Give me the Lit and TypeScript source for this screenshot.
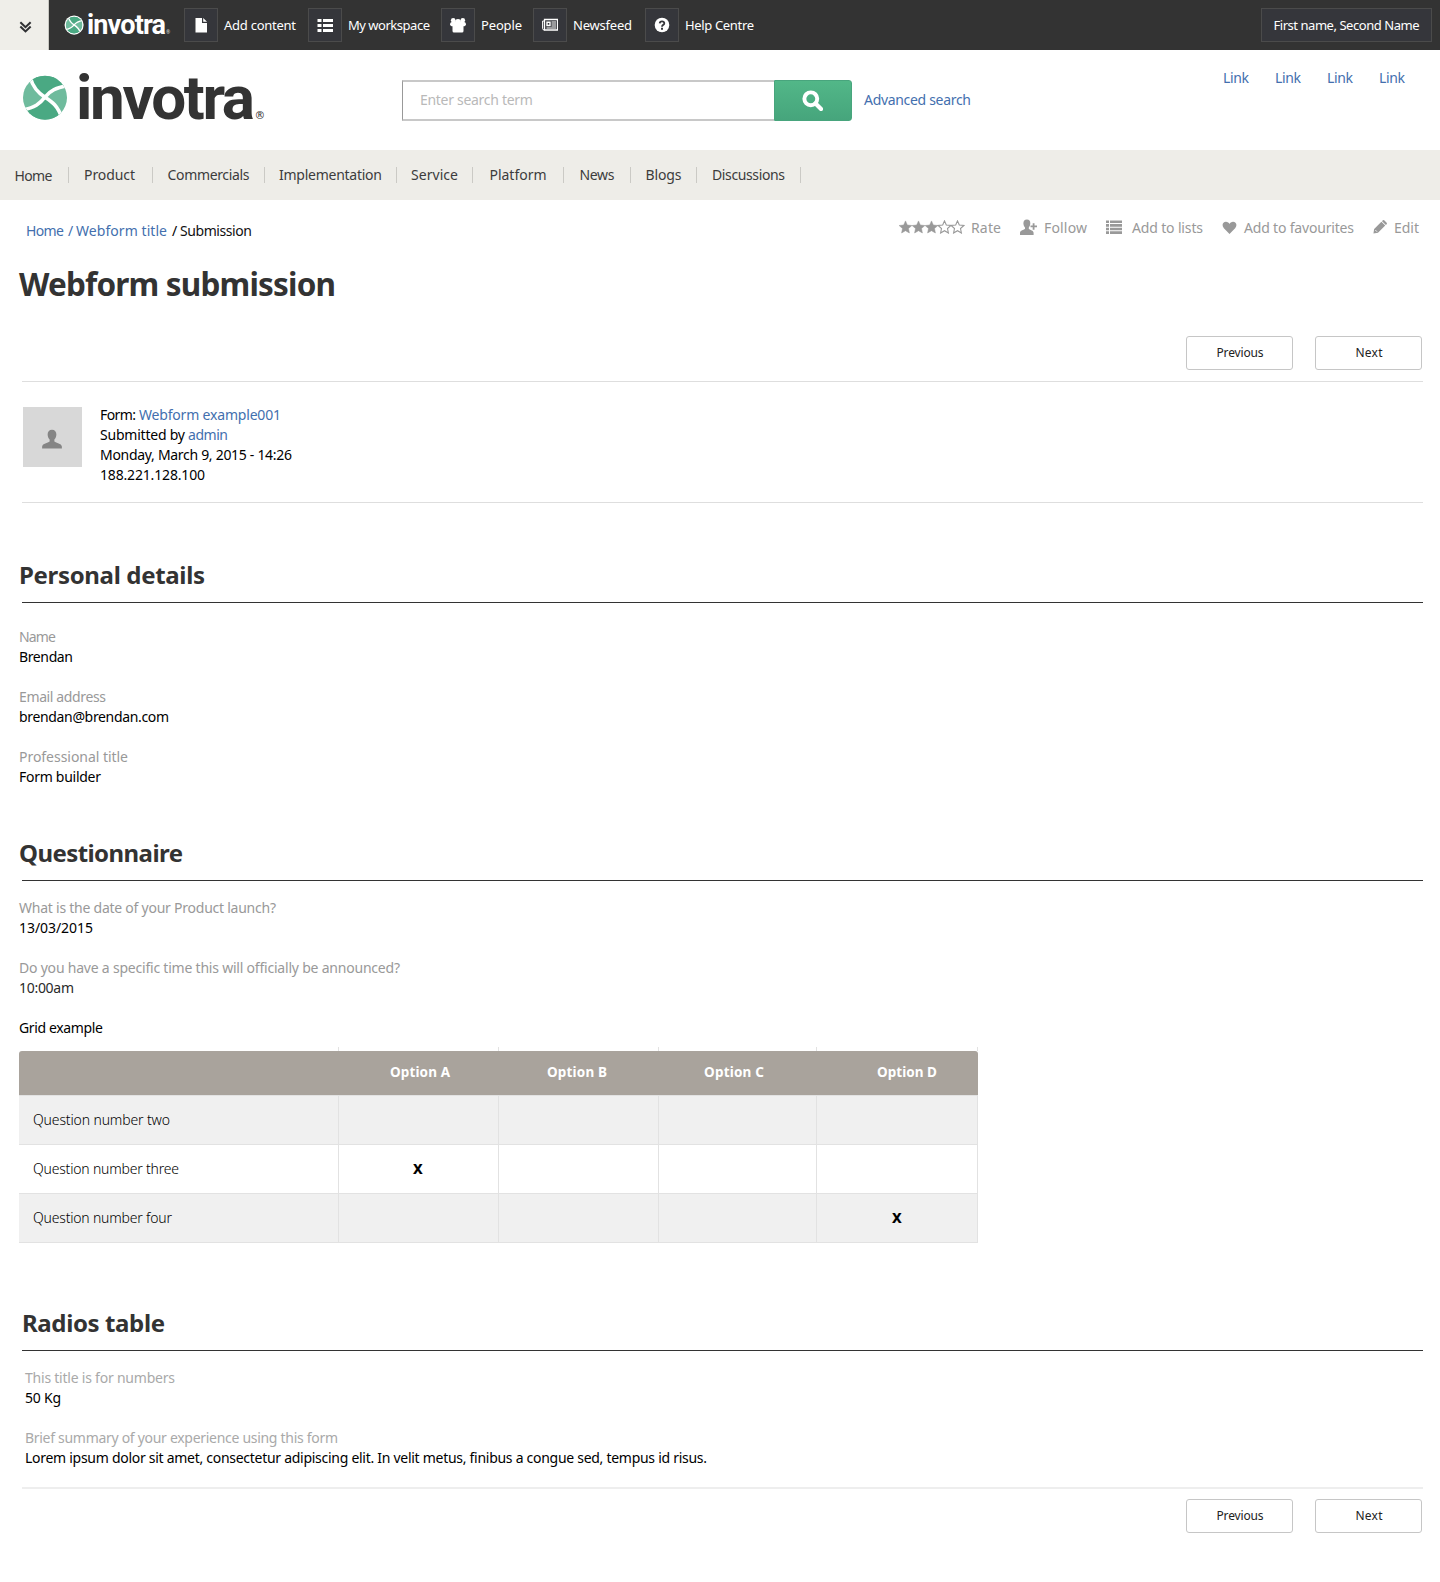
import { LitElement, html, svg, css } from "lit";
import { customElement, property } from "lit/decorators.js";

/** Single line of text whose tracking is adjusted to fill a given measure. */
@customElement("fit-text")
class FitText extends LitElement {
  static styles = css`
    :host { display: inline-block; white-space: nowrap; flex: none; text-align: left; }
  `;
  @property() text = "";
  @property({ type: Number }) w = 0;

  render() {
    return html`<span>${this.text}</span>`;
  }

  updated() {
    const span = this.renderRoot.querySelector("span") as HTMLElement;
    span.style.letterSpacing = "0";
    const natural = span.getBoundingClientRect().width;
    const gaps = Math.max(1, this.text.length - 1);
    span.style.letterSpacing = `${(this.w - natural) / gaps}px`;
    this.style.width = `${this.w}px`;
  }
}

const fit = (text: string, w: number) => html`<fit-text .text=${text} .w=${w}></fit-text>`;

const mark = (ring: boolean) => svg`
  <circle cx="22" cy="22" r=${ring ? 25 : 22} fill=${ring ? "#fff" : "none"}></circle>
  <clipPath id="disc"><circle cx="22" cy="22" r="22"></circle></clipPath>
  <g clip-path="url(#disc)">
    <rect width="44" height="44" fill="#6fbb9d"></rect>
    <path d="M8 3C10 12 15 17 22 21.5C27 15 33 12 44 10V-4H8Z" fill="#4aa983"></path>
    <path d="M38 41C35 30 29 26 22 21.5C17 28 12 32 0 34V48H38Z" fill="#4aa983"></path>
    <path d="M7 1C10 12 15 17 22 21.5S35 30 39 43M46 9.500C33 12 27 15 22 21.500S12 32 -2 34.500"
      fill="none" stroke="#fff" stroke-width="3.600"></path>
  </g>`;

const icons = {
  page: svg`<path d="M2.500 1H9v5h5v9.500H2.500Z" fill="currentColor"/><path d="M10.200 1L14 4.800H10.200Z" fill="currentColor"/>`,
  list: svg`<path d="M0.500 2h4v3h-4zM6 2h10v3H6zM0.500 7h4v3h-4zM6 7h10v3H6zM0.500 12h4v3h-4zM6 12h10v3H6z" fill="currentColor"/>`,
  people: svg`<g fill="currentColor"><circle cx="3.200" cy="3.200" r="2.300"/><circle cx="12.800" cy="3.200" r="2.300"/><circle cx="8" cy="5" r="3"/><path d="M0 8q0-3 2-3h12q2 0 2 3l-1.500 1.300H13.500V14q0 1.500-1.500 1.500H4Q2.500 15.500 2.500 14V9.300H1.500Z"/></g>`,
  news: svg`<g fill="none" stroke="currentColor"><path d="M2.500 2.500h13v10.500h-13z" stroke-width="1.300"/><path d="M2.500 4H.6v7.500q0 1.500 1.900 1.500M9.500 5h4.500M9.500 7h4.500M9.500 9h4.500M4.500 11h9.500"/><path d="M5 5.200h3v3.300H5z" stroke-width="1.400"/></g>`,
  help: svg`<circle cx="8" cy="8" r="7.300" fill="currentColor"/><path d="M5.700 6.300Q5.900 4.300 8 4.300T10.300 6.200Q10.300 7.300 9.200 7.900T8 9.700" fill="none" stroke="#35363b" stroke-width="1.800"/><path d="M7 10.800h2v1.900H7z" fill="#35363b"/>`,
  follow: svg`<path d="M6.500.5C8.700.5 9.800 2 9.700 4.200 9.600 6 8.800 7.200 8.300 8v1.500c1.500 1 4.200 1.300 4.500 3.500V15H0v-2c.3-2.200 3-2.500 4.700-3.500V8C4 7.200 3.300 6 3.200 4.200 3.200 2 4.300.5 6.500.5Z" fill="currentColor"/><path d="M12.800 4v6M9.900 7H16" stroke="currentColor" stroke-width="1.700"/>`,
  lines: svg`<path d="M0 1.500h3v2.600H0zM4 1.500h12v2.600H4zM0 5.100h3v2.600H0zM4 5.100h12v2.600H4zM0 8.700h3v2.600H0zM4 8.700h12v2.600H4zM0 12.300h3v2.600H0zM4 12.300h12v2.600H4z" fill="currentColor"/>`,
  heart: svg`<path d="M8 15L2 8.800C-.8 5.600 1 1.800 4.200 1.800 6 1.800 7.300 2.800 8 4.200 8.700 2.800 10 1.800 11.800 1.800 15 1.800 16.800 5.600 14 8.800Z" fill="currentColor"/>`,
  pencil: svg`<path d="M.5 15.500l.8-5.200L9.600 2l4.400 4.400L5.700 14.700ZM10.300 1.300l.9-.9q.8-.7 1.600 0l2.800 2.800q.7.800 0 1.600l-.9.900Z" fill="currentColor"/><path d="M2.700 11.500l1.900 1.900" stroke="#fff" stroke-width="1"/>`,
  person: svg`<path d="M8 .5c2.300 0 3.600 1.600 3.500 4C11.400 6.300 10.600 7.600 9.900 8.300v1.600c1.500 1.200 5.600 1.500 6 4v1.600H.1v-1.600c.4-2.500 4.500-2.800 6-4V8.300C5.400 7.600 4.600 6.300 4.500 4.500 4.400 2.100 5.700.5 8 .5Z" fill="currentColor"/>`,
  search: svg`<circle cx="6.700" cy="6.700" r="4.900" fill="none" stroke="currentColor" stroke-width="3"/><path d="M10.300 10.300l4.200 4.200" stroke="currentColor" stroke-width="3.200" stroke-linecap="round"/>`,
  chevrons: svg`<path d="M2.500 3.500L8 8.700l5.500-5.200M2.500 8L8 13.200 13.500 8" fill="none" stroke="currentColor" stroke-width="2.200"/>`,
};

const icon = (name: keyof typeof icons, size = 16) =>
  html`<svg class="icon" width=${size} height=${size} viewBox="0 0 16 16">${icons[name]}</svg>`;

const STAR = "M6.500 .4L8.300 4.500 12.900 5 9.500 8 10.400 12.500 6.500 10.200 2.600 12.500 3.500 8 .1 5 4.700 4.500Z";

const TOOLS: [keyof typeof icons, string, number, number][] = [
  ["page", "Add content", 72, 308 - 184],
  ["list", "My workspace", 82, 441 - 308],
  ["people", "People", 41, 533 - 441],
  ["news", "Newsfeed", 59, 645 - 533],
  ["help", "Help Centre", 69, 120],
];
const NAV: [string, number][] = [
  ["Home", 38], ["Product", 51], ["Commercials", 82], ["Implementation", 103], ["Service", 47],
  ["Platform", 57], ["News", 35], ["Blogs", 36], ["Discussions", 73],
];
const OPTIONS: [string, string][] = [["Option A", "a"], ["Option B", "b"], ["Option C", "c"], ["Option D", "d"]];
const ROWS: [string, number, number][] = [
  ["Question number two", 137, -1],
  ["Question number three", 146, 0],
  ["Question number four", 139, 3],
];

@customElement("app-root")
class AppRoot extends LitElement {
  static styles = css`
    :host { display: block; width: 1440px; height: 1582px; background: #fff; color: #000;
      font: 450 14px/20px "Noto Sans", "Open Sans", sans-serif; overflow: hidden; }
    * { box-sizing: border-box; }
    .icon { display: block; flex: none; }
    a, .link { color: #436fae; text-decoration: none; }

    .topbar { display: flex; align-items: center; height: 50px; background: #333; color: #fff; font-size: 13px; padding-right: 8px; }
    .toggle { display: flex; align-items: center; justify-content: center; width: 49px; height: 50px; padding: 2px 0 0 2px;
      background: #efeee9; color: #2f3033; border-right: 1px solid #c9c8c2; }
    .minilogo { margin-left: 14px; width: 121px; height: 30px; flex: none; overflow: visible; }
    .tool { display: flex; align-items: center; gap: 6px; flex: none; }
    .box { display: flex; align-items: center; justify-content: center; width: 34px; height: 34px; background: #35363b; border: 1px solid #4b4b4b; }
    .user { display: flex; align-items: center; justify-content: center; width: 171px; height: 34px; margin-left: auto;
      background: #35363b; border: 1px solid #4b4b4b; }

    .header { display: flex; height: 100px; padding-left: 22px; }
    .logo { width: 380px; height: 70px; flex: none; margin-top: 13px; overflow: visible; }
    .word { font-family: Roboto, "Open Sans", sans-serif; font-weight: 700; }
    .search { display: flex; align-items: center; height: 41px; margin-top: 30px; }
    .field { width: 372px; height: 41px; padding: 0 0 2px 17px; font: inherit; letter-spacing: -0.300px; background: #fff; outline: none;
      border: solid #c8c8c8; border-width: 2px 0 2px 1px; border-left-color: #999; border-radius: 0; }
    .field::placeholder { color: #b9b9b9; opacity: 1; }
    .go { display: flex; align-items: center; justify-content: center; width: 78px; height: 41px; padding: 0 1px 0 0; color: #fff;
      border: 1px solid #48a57d; border-radius: 0 3px 3px 0; background: linear-gradient(#52b788, #46a57c); }
    .advanced { margin: -2px 0 0 12px; }
    .links { display: flex; gap: 26px; margin: 18px 35px 0 auto; }

    .nav { display: grid; grid-template-columns: 69px 84px 112px 132px 76px 91px 67px 66px 104px; align-items: center;
      height: 50px; background: #eeede8; color: #3c3c3c; }
    .item { display: flex; justify-content: center; height: 16px; line-height: 15px; border-right: 1px solid #cbcac5; }
    .item:first-child { line-height: 17px; padding-right: 1px; }
    .item:nth-child(2) { padding-right: 2px; }

    .meta { display: flex; justify-content: space-between; height: 62px; padding: 21px 21px 0 26px; }
    .crumbs { display: flex; }
    .crumbs .slash { margin: 0 1px 0 4px; width: 7px; }
    .crumbs .slash.last { margin-left: 5px; }
    .crumbs .current { color: #111; }
    .actions { display: flex; align-items: center; height: 16px; color: #999; margin-top: -2px; }
    .actions fit-text { margin-top: 2px; }
    .stars { width: 66px; height: 14px; margin-right: 6px; }
    .act { display: flex; align-items: center; margin-left: 19px; }
    .act:first-child { margin-left: 0; }
    .g7 { gap: 7px; } .g9 { gap: 10px; }

    h1, h2 { margin: 0; color: #333; font-weight: 700; }
    h1 { font-size: 31.500px; line-height: 44px; padding-left: 19px; height: 44px; }
    .pager { display: flex; justify-content: flex-end; gap: 22px; padding-right: 18px; height: 34px; }
    .btn { display: flex; align-items: center; justify-content: center; width: 107px; height: 34px; padding: 0 0 0 1px; background: #fff;
      border: 1px solid #c6c6c6; border-radius: 3px; font: inherit; font-size: 12px; color: #222; }
    .top { margin-top: 30px; }

    .info { display: flex; gap: 18px; height: 122px; margin: 11px 17px 0 22px; padding: 25px 0 0 1px; border: solid #dedede; border-width: 1px 0; }
    .avatar { display: flex; align-items: center; justify-content: center; width: 59px; height: 60px; padding: 3px 2px 0 0; background: #d8d8d8; color: #858585; }
    .lines { display: flex; flex-direction: column; margin-top: -2px; }
    .line { display: flex; gap: 3px; height: 20px; }

    h2 { font-size: 24px; line-height: 36px; height: 46px; margin: 0 17px 0 22px; border-bottom: 1px solid #333; }
    h2 fit-text { margin-left: -3px; }
    .s1 { margin-top: 54px; }
    .s2 { margin-top: 48px; }
    .s3 { margin-top: 62px; }
    .s3 fit-text { margin-left: 0; }
    .fields { display: flex; flex-direction: column; gap: 20px; padding-left: 19px; }
    .f1 { padding-top: 24px; }
    .f2 { padding-top: 17px; }
    .f3 { padding: 17px 0 0 25px; }
    .field-row { display: flex; flex-direction: column; }
    .label { color: #999; }
    .f3 .label { color: #a9a9a9; }
    .dim { color: #2a2a2a; }

    .grid { width: 959px; margin: 9px 0 0 19px; }
    .r { display: grid; grid-template-columns: 320px 160px 160px 158px 161px; height: 49px; border-bottom: 1px solid #e2e2e2; background: #fff; }
    .r.odd { background: #f0f0f0; }
    .r .c { display: flex; align-items: center; border-right: 1px solid #e2e2e2; }
    .r .q { padding: 0 0 1px 14px; font-weight: 350; }
    .r .x { padding-left: 74px; font-weight: 800; }
    .r .x:last-child { padding-left: 75px; }
    .stubs { height: 4px; border: 0; }
    .head { height: 45px; background: #a9a39c; border-radius: 3px 3px 0 0; color: #fff; font-weight: 700; font-size: 13.500px; }
    .head .c { border: 0; padding-bottom: 2px; }
    .head .a { padding-left: 51px; } .head .b { padding-left: 48px; } .head .cc { padding-left: 45px; } .head .d { padding-left: 60px; }
    .end { height: 2px; margin: 19px 17px 10px 22px; background: #eee; }
  `;

  private field(label: string, lw: number, value: string, vw: number, tone = "") {
    return html`<div class="field-row">
      <div class="label">${fit(label, lw)}</div>
      <div class=${tone}>${fit(value, vw)}</div>
    </div>`;
  }

  private pager(cls: string) {
    return html`<div class="pager ${cls}">
      <button class="btn">${fit("Previous", 47)}</button>
      <button class="btn">${fit("Next", 27)}</button>
    </div>`;
  }

  render() {
    return html`
      <div class="topbar">
        <div class="toggle">${icon("chevrons", 15)}</div>
        <svg class="minilogo" viewBox="0 0 121 30">
          <g transform="translate(2.700 6.700) scale(.382)">${mark(true)}</g>
          <text class="word" x="24" y="24" font-size="27" fill="#fff" textLength="79" lengthAdjust="spacing">invotra</text>
          <text x="103" y="24" font-size="5" fill="#ddd">®</text>
        </svg>
        ${TOOLS.map(([i, t, w, slot]) => html`
          <div class="tool" style="width:${slot}px"><span class="box">${icon(i)}</span>${fit(t, w)}</div>`)}
        <div class="user">${fit("First name, Second Name", 146)}</div>
      </div>

      <div class="header">
        <svg class="logo" viewBox="22 63 380 70">
          <g transform="translate(23 75.700)">${mark(false)}</g>
          <text class="word" x="76" y="118.500" font-size="62" fill="#333" textLength="179" lengthAdjust="spacing">invotra</text>
          <text x="255.500" y="119" font-family="Noto Sans, sans-serif" font-size="10.500" fill="#333">®</text>
        </svg>
        <div class="search">
          <input class="field" placeholder="Enter search term" />
          <button class="go">${icon("search", 21)}</button>
          <a class="advanced">${fit("Advanced search", 107)}</a>
        </div>
        <div class="links">${[0, 1, 2, 3].map(() => html`<a>${fit("Link", 26)}</a>`)}</div>
      </div>

      <div class="nav">${NAV.map(([t, w]) => html`<span class="item">${fit(t, w)}</span>`)}</div>

      <div class="meta">
        <div class="crumbs">
          <a>${fit("Home", 38)}</a><a class="slash">/</a><a>${fit("Webform title", 91)}</a>
          <span class="slash last">/</span><span class="current">${fit("Submission", 72)}</span>
        </div>
        <div class="actions">
          <div class="act">
            <svg class="stars" viewBox="0 0 66 14">
              ${[0, 1, 2, 3, 4].map((n) => svg`<path d=${STAR} transform="translate(${n * 13} .5)"
                fill=${n < 3 ? "#999" : "none"} stroke="#999" stroke-width=${n < 3 ? 0.5 : 1.1}></path>`)}
            </svg>${fit("Rate", 30)}
          </div>
          <div class="act g7">${icon("follow", 17)}${fit("Follow", 43)}</div>
          <div class="act g9">${icon("lines")}${fit("Add to lists", 71)}</div>
          <div class="act g7">${icon("heart", 15)}${fit("Add to favourites", 110)}</div>
          <div class="act g7">${icon("pencil", 14)}${fit("Edit", 25)}</div>
        </div>
      </div>

      <h1>${fit("Webform submission", 317)}</h1>
      ${this.pager("top")}

      <div class="info">
        <div class="avatar">${icon("person", 20)}</div>
        <div class="lines">
          <div class="line">${fit("Form:", 36)}<a>${fit("Webform example001", 142)}</a></div>
          <div class="line">${fit("Submitted by", 85)}<a>${fit("admin", 40)}</a></div>
          <div class="line">${fit("Monday, March 9, 2015 - 14:26", 192)}</div>
          <div class="line">${fit("188.221.128.100", 105)}</div>
        </div>
      </div>

      <h2 class="s1">${fit("Personal details", 186)}</h2>
      <div class="fields f1">
        ${this.field("Name", 37, "Brendan", 54)}
        ${this.field("Email address", 87, "brendan@brendan.com", 150)}
        ${this.field("Professional title", 109, "Form builder", 82)}
      </div>

      <h2 class="s2">${fit("Questionnaire", 164)}</h2>
      <div class="fields f2">
        ${this.field("What is the date of your Product launch?", 257, "13/03/2015", 74)}
        ${this.field("Do you have a specific time this will officially be announced?", 381, "10:00am", 55, "dim")}
        <div>${fit("Grid example", 84)}</div>
      </div>

      <div class="grid">
        <div class="r stubs">${[0, 1, 2, 3, 4].map(() => html`<span class="c"></span>`)}</div>
        <div class="r head"><span class="c"></span>
          ${OPTIONS.map(([t, k]) => html`<span class="c ${k === "c" ? "cc" : k}">${fit(t, 60)}</span>`)}
        </div>
        ${ROWS.map(([t, w, mark], i) => html`
          <div class="r ${i % 2 ? "" : "odd"}">
            <span class="c q">${fit(t, w)}</span>
            ${OPTIONS.map((_, n) => html`<span class="c x">${n === mark ? "X" : ""}</span>`)}
          </div>`)}
      </div>

      <h2 class="s3">${fit("Radios table", 143)}</h2>
      <div class="fields f3">
        ${this.field("This title is for numbers", 150, "50 Kg", 36)}
        ${this.field("Brief summary of your experience using this form", 313,
          "Lorem ipsum dolor sit amet, consectetur adipiscing elit. In velit metus, finibus a congue sed, tempus id risus.", 682)}
      </div>
      <div class="end"></div>
      ${this.pager("")}
    `;
  }
}
